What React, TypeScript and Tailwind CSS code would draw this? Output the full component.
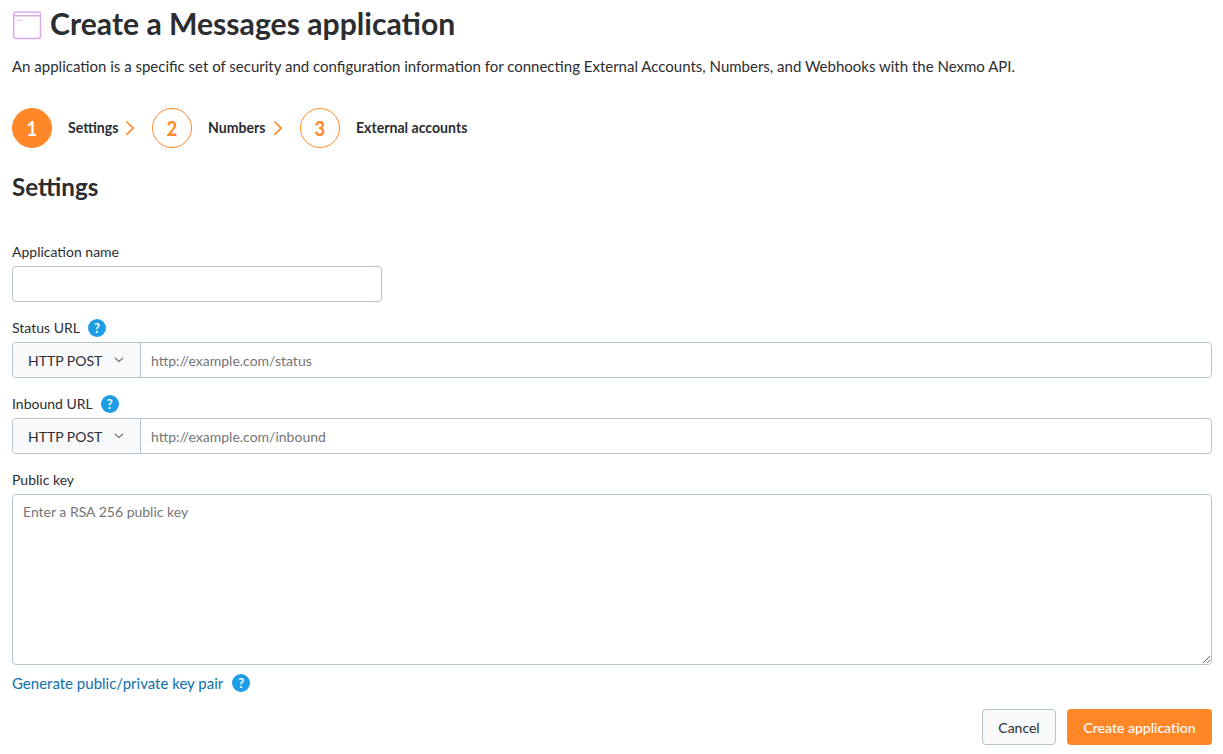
import { Fragment } from 'react'

const steps = ['Settings', 'Numbers', 'External accounts']

function HelpIcon() {
  return (
    <span className="flex h-[18px] w-[18px] items-center justify-center rounded-full bg-[#1e9de7] text-[13px] font-bold leading-none text-white">
      ?
    </span>
  )
}

function AppIcon() {
  return (
    <svg width="30" height="30" viewBox="0 0 30 30" fill="none" stroke="#dba9e8" strokeWidth="1.5">
      <rect x="1.7" y="1.9" width="26.8" height="26.6" rx="2.2" />
      <path d="M1.7 5.7h26.8M5.3 10.5h1.6M8.2 10.5h1.6" />
    </svg>
  )
}

function StepArrow() {
  return (
    <svg className="mx-[7px]" width="10" height="16" viewBox="0 0 10 16" fill="none" stroke="#ff8a2b" strokeWidth="1.7" strokeLinecap="round" strokeLinejoin="round">
      <path d="M1.8 2L8.2 8.2L1.8 14.3" />
    </svg>
  )
}

interface UrlFieldProps {
  label: string
  placeholder: string
}

function UrlField({ label, placeholder }: UrlFieldProps) {
  return (
    <div className="mt-4">
      <div className="flex h-5 items-center gap-2 text-sm">
        <label>{label}</label>
        <HelpIcon />
      </div>
      <div className="mt-1 flex h-9 overflow-hidden rounded-[4px] border border-[#b6c3cd]">
        <button type="button" className="flex w-[128px] items-center border-r border-[#b6c3cd] bg-[#f8f9fb] pl-[15px] pt-0.5 text-sm">
          HTTP POST
          <svg className="mb-[3px] ml-3" width="10" height="6" viewBox="0 0 10 6" fill="none" stroke="#7b8187" strokeWidth="1.3" strokeLinecap="round" strokeLinejoin="round">
            <path d="M1.3 1.2L5 4.6L8.7 1.2" />
          </svg>
        </button>
        <input className="flex-1 px-2.5 pt-0.5 text-sm outline-none placeholder:text-[#757575]" placeholder={placeholder} />
      </div>
    </div>
  )
}

export default function App() {
  return (
    <main className="h-[754px] overflow-hidden bg-white pl-3 pr-[11px] font-[Lato,sans-serif] text-[#2b2d30]">
      <header>
        <div className="flex h-[50px] items-center gap-2">
          <AppIcon />
          <h1 className="pb-1 text-[30.15px] font-bold leading-9">Create a Messages application</h1>
        </div>
        <p className="mt-1 text-[15px] leading-6">
          An application is a specific set of security and configuration information for connecting External Accounts, Numbers, and Webhooks with the Nexmo API.
        </p>
      </header>

      <div className="mt-[30px] flex h-10 items-center">
        {steps.map((step, i) => (
          <Fragment key={step}>
            {i > 0 && <StepArrow />}
            <div
              className={`flex h-10 w-10 items-center justify-center rounded-full border border-[#ff8728] text-xl font-bold ${
                i === 0 ? 'bg-[#ff8728] text-white' : 'ml-2.5 text-[#ff8728]'
              }`}
            >
              <span className="scale-x-[0.92]">{i + 1}</span>
            </div>
            <span className="-mr-[3.3px] ml-4 origin-left scale-x-[0.94] pb-0.5 text-[15px] font-bold">{step}</span>
          </Fragment>
        ))}
      </div>

      <h2 className="mt-[23px] text-[24.15px] font-bold leading-8">Settings</h2>

      <form>
        <div className="mt-[39px]">
          <label className="block text-sm leading-5">Application name</label>
          <input className="mt-1 block h-9 w-[370px] rounded-[4px] border border-[#b6c3cd] px-2.5 text-sm" />
        </div>
        <UrlField label="Status URL" placeholder="http://example.com/status" />
        <UrlField label="Inbound URL" placeholder="http://example.com/inbound" />
        <div className="mt-4">
          <label className="block text-sm leading-5">Public key</label>
          <textarea
            className="mt-1 block h-[171px] w-full resize rounded-[4px] border border-[#b6c3cd] px-2.5 py-[7px] text-sm leading-5 placeholder:text-[#757575]"
            placeholder="Enter a RSA 256 public key"
          />
        </div>
        <div className="mt-1.5 flex h-6 items-center gap-[9px]">
          <a href="#" className="text-[15px] leading-6 text-[#0f70ad]">Generate public/private key pair</a>
          <HelpIcon />
        </div>
        <div className="mt-3.5 flex justify-end gap-[11px]">
          <button type="button" className="h-9 w-[74px] rounded-[4px] border border-[#b6c3cd] bg-[#f8f9fb] pt-0.5 text-sm">Cancel</button>
          <button type="button" className="h-9 w-[145px] rounded-[4px] bg-[#ff8728] pt-0.5 text-sm font-medium text-white">Create application</button>
        </div>
      </form>
    </main>
  )
}
